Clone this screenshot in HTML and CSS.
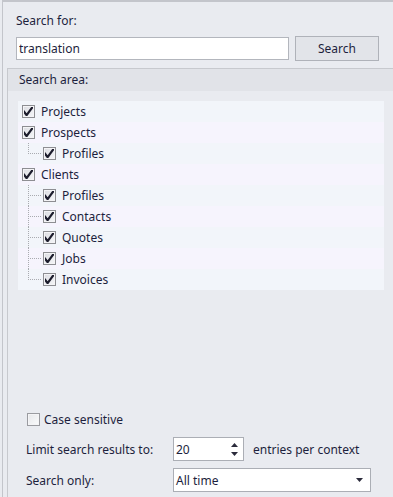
FILE: index.html
```html
<!DOCTYPE html>
<html lang="en">
  <head>
    <meta charset="UTF-8" />
    <meta name="viewport" content="width=device-width, initial-scale=1.0" />
    <title>Search</title>
    <link rel="stylesheet" href="styles.css">
  </head>
  <body>
    <div class="frame">
      <div class="search-for">
        <label for="query" class="caption">Search for:</label>
        <div class="query-row">
          <input id="query" class="query-input" value="translation" />
          <button class="search-button">Search</button>
        </div>
      </div>

      <div class="area">
        <div class="area-header">Search area:</div>
        <div class="area-body">
          <ul class="tree">
            <li class="node"><span class="check on"></span>Projects</li>
            <li class="node"><span class="check on"></span>Prospects</li>
            <li class="node child last"><span class="twig"></span><span class="check on"></span>Profiles</li>
            <li class="node"><span class="check on"></span>Clients</li>
            <li class="node child"><span class="twig"></span><span class="check on"></span>Profiles</li>
            <li class="node child"><span class="twig"></span><span class="check on"></span>Contacts</li>
            <li class="node child"><span class="twig"></span><span class="check on"></span>Quotes</li>
            <li class="node child"><span class="twig"></span><span class="check on"></span>Jobs</li>
            <li class="node child last"><span class="twig"></span><span class="check on"></span>Invoices</li>
          </ul>

          <div class="options">
            <label class="case-row"><span class="check"></span>Case sensitive</label>
            <div class="option-row">
              <span class="option-label">Limit search results to:</span>
              <div class="spinner">
                <span>20</span>
                <span class="spin-arrows">
                  <svg width="7" height="4" viewBox="0 0 7 4"><path d="M0 4 L3.5 0 L7 4 Z" fill="#2b2b3b"/></svg>
                  <svg width="7" height="4" viewBox="0 0 7 4"><path d="M0 0 L3.5 4 L7 0 Z" fill="#2b2b3b"/></svg>
                </span>
              </div>
              <span class="option-after">entries per context</span>
            </div>
            <div class="option-row">
              <span class="option-label">Search only:</span>
              <div class="dropdown">
                <span>All time</span>
                <svg width="7" height="4" viewBox="0 0 7 4"><path d="M0 0 L3.5 4 L7 0 Z" fill="#2b2b3b"/></svg>
              </div>
            </div>
          </div>
        </div>
      </div>
    </div>
  </body>
</html>
```

FILE: styles.css
```css
* {
  box-sizing: border-box;
}
html,
body {
  height: 100%;
}
body {
  margin: 0;
  background: #e9ebf0;
  font-family: "Noto Sans", "Open Sans", sans-serif;
  font-size: 12px;
  color: #1d1f3d;
}
.frame {
  display: flex;
  flex-direction: column;
  height: 100%;
  margin-left: 2px;
  padding-top: 2px;
  border-left: 1px solid #c3c5cb;
  box-shadow: inset 0 2px 0 #c3c5cb;
}
.search-for {
  padding: 11px 14px 0 13px;
}
.caption {
  display: block;
  line-height: 16px;
}
.query-row {
  display: flex;
  align-items: center;
  margin-top: 7px;
  gap: 6px;
}
.query-input {
  width: 273px;
  height: 23px;
  margin: 0;
  padding: 0 2px;
  border: 1px solid #b3b6bd;
  background: #fff;
  font: inherit;
  color: inherit;
  outline: none;
}
.search-button {
  width: 84px;
  height: 25px;
  margin: 0;
  padding: 0;
  border: 1px solid #afb2b9;
  background: #e2e4e9;
  font: inherit;
  color: inherit;
}
.area {
  display: flex;
  flex-direction: column;
  flex: 1;
  margin: 7px 0 0 4px;
  border-top: 1px solid #c7c9ce;
  border-left: 1px solid #c7c9ce;
}
.area-header {
  height: 22px;
  line-height: 21px;
  padding-left: 11px;
  background: #e1e3e8;
}
.area-body {
  display: flex;
  flex-direction: column;
  flex: 1;
  padding: 10px 9px 5px 10px;
}
.tree {
  margin: 0;
  padding: 0;
  list-style: none;
}
.node {
  display: flex;
  align-items: center;
  height: 21px;
  padding-left: 4px;
  background: #f2f5fa;
}
.node:nth-child(even) {
  background: #f6f4fd;
}
.node.child {
  padding-left: 10px;
}
.twig {
  align-self: stretch;
  width: 15px;
  background:
    repeating-linear-gradient(to bottom, #a9abb0 0 1px, transparent 1px 2px) 0 0 / 1px 100% no-repeat,
    repeating-linear-gradient(to right, #a9abb0 0 1px, transparent 1px 2px) 2px 10px / 12px 1px no-repeat;
}
.last .twig {
  background:
    repeating-linear-gradient(to bottom, #a9abb0 0 1px, transparent 1px 2px) 0 0 / 1px 11px no-repeat,
    repeating-linear-gradient(to right, #a9abb0 0 1px, transparent 1px 2px) 2px 10px / 12px 1px no-repeat;
}
.check {
  flex: none;
  width: 13px;
  height: 13px;
  margin-right: 6px;
  border: 1px solid #8d8e92;
  background: linear-gradient(135deg, #dcdde2, #f5f6f8);
  box-shadow: inset 0 0 0 1px #f4f4f6;
}
.check.on {
  background:
    url("data:image/svg+xml,%3Csvg xmlns='http://www.w3.org/2000/svg' width='13' height='13' viewBox='0 0 13 13'%3E%3Cpath d='M1.5 6 L4.6 10.2 L12 0' fill='none' stroke='%231c1c2c' stroke-width='2.2'/%3E%3C/svg%3E") -1px -1px / 13px 13px no-repeat,
    linear-gradient(135deg, #dcdde2, #f5f6f8);
}
.options {
  display: flex;
  flex-direction: column;
  margin-top: auto;
  padding-left: 8px;
}
.case-row {
  display: flex;
  align-items: center;
  height: 16px;
  padding-left: 1px;
}
.case-row .check {
  margin-right: 4px;
  border-color: #9a9ba0;
  background: linear-gradient(135deg, #e6e7ea, #fafbfc);
}
.option-row {
  display: flex;
  align-items: center;
  margin-top: 7px;
}
.case-row + .option-row {
  margin-top: 10px;
}
.option-label {
  width: 147px;
}
.spinner,
.dropdown {
  display: flex;
  align-items: center;
  justify-content: space-between;
  height: 24px;
  padding: 0 5px 0 2px;
  border: 1px solid #abaeb5;
  background: #fff;
}
.spinner {
  width: 71px;
}
.spin-arrows {
  display: flex;
  flex-direction: column;
  gap: 5px;
}
.spin-arrows svg {
  display: block;
}
.option-after {
  margin-left: 9px;
}
.dropdown {
  width: 198px;
  padding-right: 7px;
}
```
